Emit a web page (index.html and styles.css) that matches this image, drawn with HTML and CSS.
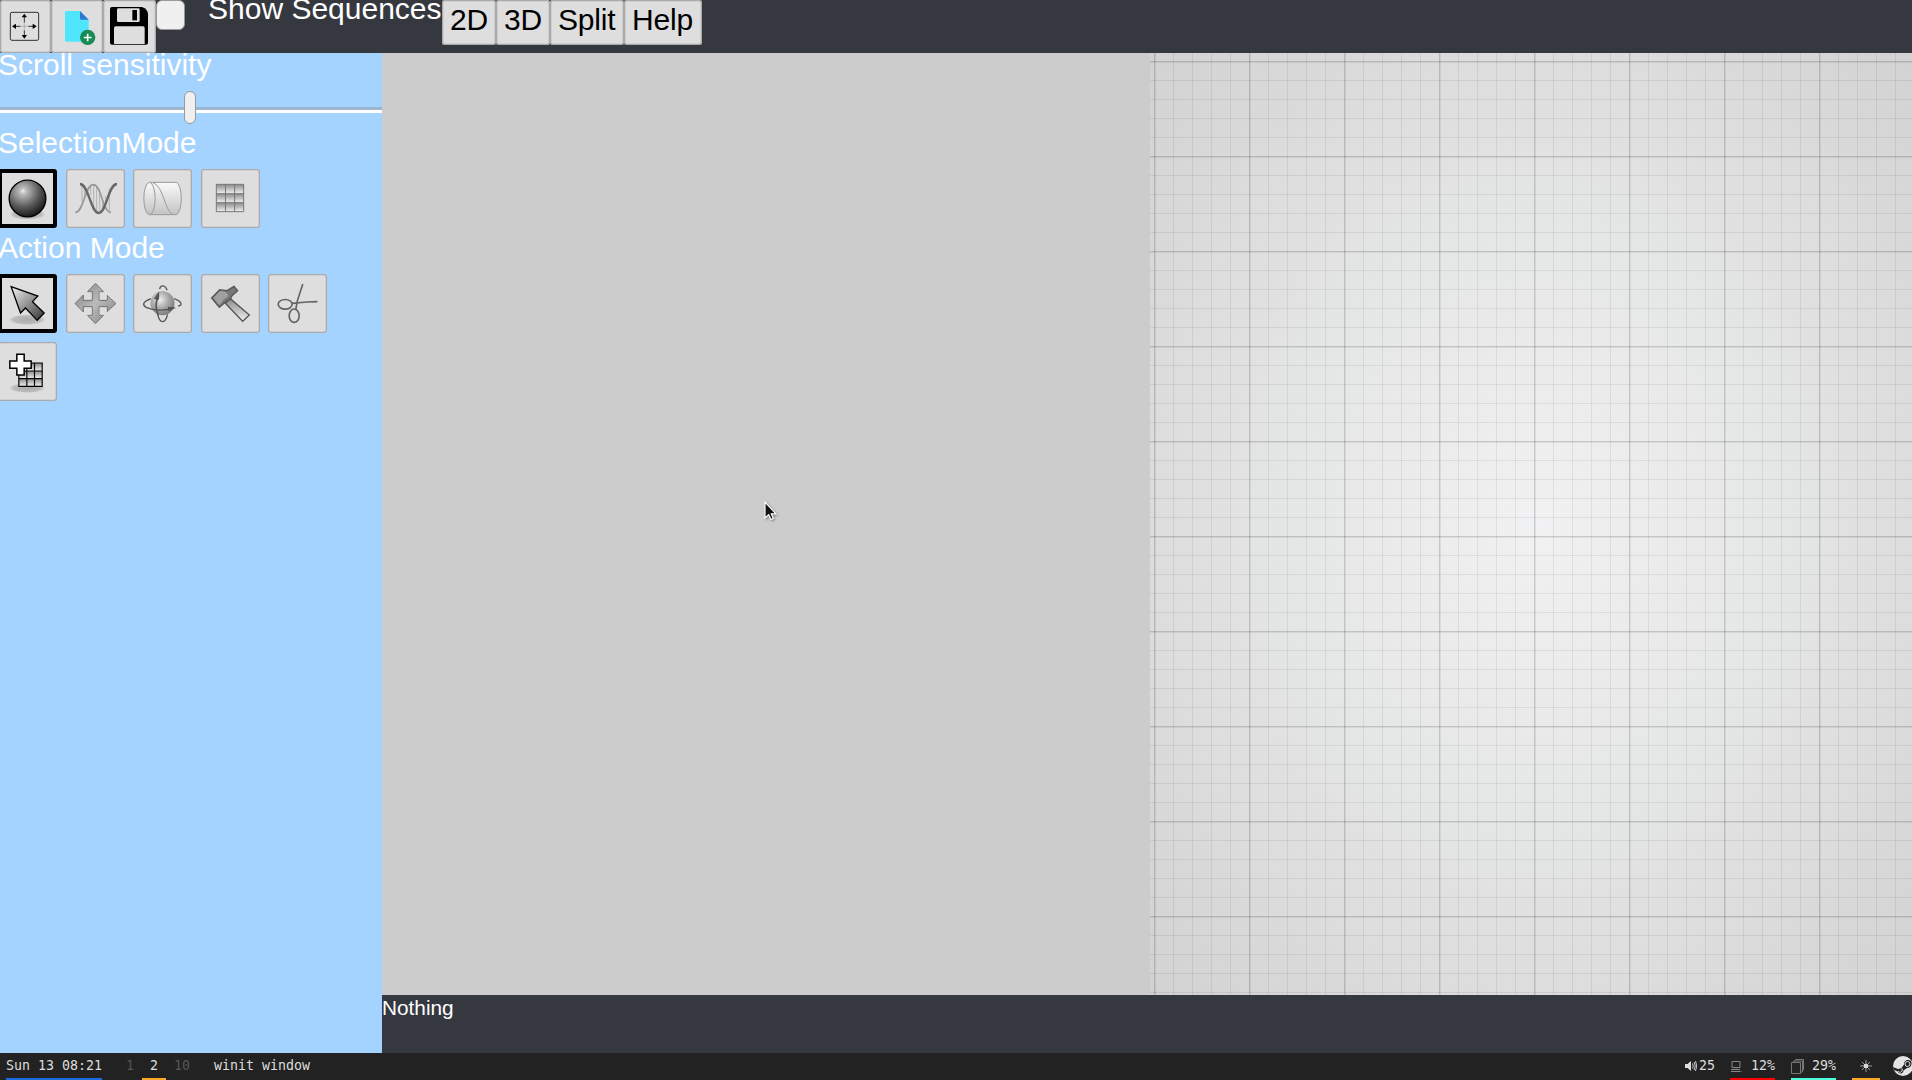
FILE: index.html
```html
<!DOCTYPE html>
<html lang="en">
<head>
<meta charset="utf-8">
<title>winit window</title>
<link rel="stylesheet" href="styles.css">
</head>
<body>
<svg class="defs" aria-hidden="true">
  <defs>
    <radialGradient id="ball" cx=".38" cy=".3" r=".75"><stop offset="0" stop-color="#eee"/><stop offset=".12" stop-color="#bbb"/><stop offset=".6" stop-color="#555"/><stop offset="1" stop-color="#111"/></radialGradient>
    <radialGradient id="ball2" cx=".4" cy=".35" r=".7"><stop offset="0" stop-color="#eee"/><stop offset=".5" stop-color="#aaa"/><stop offset="1" stop-color="#777"/></radialGradient>
    <linearGradient id="down" x2="0" y2="1"><stop offset="0" stop-color="#fafafa"/><stop offset="1" stop-color="#c4c4c4"/></linearGradient>
    <linearGradient id="cell" x2="0" y2="1"><stop offset="0" stop-color="#8b8b8b"/><stop offset="1" stop-color="#f2f2f2"/></linearGradient>
    <linearGradient id="diag" x2="1" y2="1"><stop offset="0" stop-color="#f4f4f4"/><stop offset="1" stop-color="#333"/></linearGradient>
    <linearGradient id="grey" x2="1" y2="1"><stop offset="0" stop-color="#7c7c7c"/><stop offset=".5" stop-color="#bbb"/><stop offset="1" stop-color="#7c7c7c"/></linearGradient>
    <radialGradient id="shade"><stop offset="0" stop-color="#aaa"/><stop offset=".75" stop-color="#bbb"/><stop offset="1" stop-color="#bbb" stop-opacity="0"/></radialGradient>
  </defs>
</svg>
<header class="topbar">
  <button class="tool" aria-label="Fit"><svg viewBox="0 0 153 159"><rect x="31" y="37" width="85" height="84" rx="5" fill="none" stroke="#111" stroke-width="2.5"/><path d="M73 48V67M73 91V110M43 79H61M85 79H103" stroke="#111" stroke-width="2.5"/><path d="M73 68V90M62 79H84" stroke="#333" stroke-width="2" stroke-dasharray="2 4"/><path d="M73 41l8 11H65zM73 116l8-11H65zM36 79l12-8v16zM110 79l-12-8v16z"/></svg></button>
  <button class="tool new" aria-label="New"><svg viewBox="153 0 156 159"><path d="M199 33H240L266 59V125H199Q195 125 195 121V37Q195 33 199 33z" fill="#4ee5fd"/><path d="M240 33L266 59H243Q240 59 240 56z" fill="#2f78d2"/><circle cx="263" cy="112" r="23" fill="#188a53"/><path d="M263 101V124M251.500 112.500H275" stroke="#fff" stroke-width="5"/></svg></button>
  <button class="tool save" aria-label="Save"><svg viewBox="309 0 159 159"><path d="M336 21H426Q444 28 444 43V128Q444 134 438 134H336Q330 134 330 128V27Q330 21 336 21z"/><path d="M355 25H415Q419 25 419 29V62Q419 66 415 66H355Q351 66 351 62V29Q351 25 355 25zM348 79H429Q434 79 434 84V132H342V84Q342 79 348 79z" fill="#dedede"/><path d="M397 30H411V61H397z"/></svg></button>
  <span class="check"></span>
  <span class="check-label">Show Sequences</span>
  <button class="view">2D</button><button class="view">3D</button><button class="view split">Split</button><button class="view help">Help</button>
</header>
<main class="workspace">
  <aside class="sidebar">
    <h2 class="label">Scroll sensitivity</h2>
    <div class="slider"><span class="thumb"></span></div>
    <h2 class="label">SelectionMode</h2>
    <div class="icons">
      <button class="icon active" aria-label="Nucleotide"><svg viewBox="-4.500 147 177 177"><ellipse cx="84" cy="283" rx="55" ry="16" fill="url(#shade)"/><circle cx="84" cy="235.500" r="55" fill="url(#ball)" stroke="#000" stroke-width="4"/></svg></button>
      <button class="icon" aria-label="Strand"><svg viewBox="198 147 177 177"><path d="M246 198V246M254 204V232M272 196V224M281 194V258M290 199V276M299 217V278M308 240V270M317 228V266M328 206V273" stroke="#aaa" stroke-width="2.500"/><path d="M226 277C252 277 254 194 280 194S306 277 333 277" fill="none" stroke="#999" stroke-width="5"/><path d="M240 192C266 192 272 279 296 279S324 192 351 192" fill="none" stroke="#686868" stroke-width="7"/></svg></button>
      <button class="icon" aria-label="Helix"><svg viewBox="400.500 147 177 177"><path d="M450 187H532C550 203 550 267 532 284H450z" fill="url(#down)" stroke="#999" stroke-width="3"/><ellipse cx="450" cy="235.500" rx="17" ry="48.500" fill="url(#down)" stroke="#999" stroke-width="3"/><path d="M460 188C493 198 494 270 519 283" fill="none" stroke="#999" stroke-width="3"/></svg></button>
      <button class="icon" aria-label="Grid"><svg viewBox="603 147 177 177"><g fill="url(#cell)"><path d="M649 193h83v28h-83z"/><path d="M649 221h83v27h-83z"/><path d="M649 248h83v27h-83z"/></g><path d="M649 193H731V275H649zM676.500 193V275M704 193V275M649 221H731M649 248H731" fill="none" stroke="#777" stroke-width="3"/></svg></button>
    </div>
    <h2 class="label action">Action Mode</h2>
    <div class="icons">
      <button class="icon active" aria-label="Select"><svg viewBox="-4.500 42 177 177"><ellipse cx="83" cy="179" rx="55" ry="16" fill="url(#shade)"/><path d="M35 80L115 108L99 125L134 159L113 181L78 144L63 159z" fill="url(#diag)" stroke="#000" stroke-width="4"/></svg></button>
      <button class="icon" aria-label="Translate"><svg viewBox="198 42 177 177"><path d="M286.500 70L311 95H299V106H305V122H320V105L348 130.500L320 156V140H305V155H299V166H311L286.500 191L262 166H274V140H250V156L225 130.500L250 105V122H274V95H262z" fill="url(#grey)" stroke="#777" stroke-width="3"/><path d="M251 94h26v27h-26zM296 94h26v27h-26zM251 140h26v27h-26zM296 140h26v27h-26z" fill="#dedede"/><path d="M262 95H277V121H250V105M311 95H297V121H322V105M262 166H277V140H250V156M311 166H297V140H322V156" fill="none" stroke="#777" stroke-width="3"/></svg></button>
      <button class="icon" aria-label="Rotate"><svg viewBox="400.500 42 177 177"><path d="M480 87C484 74 496 74 503 91M475 163C480 192 498 192 504 163" fill="none" stroke="#555" stroke-width="4"/><circle cx="489" cy="130" r="36" fill="url(#ball2)"/><path d="M454 116C430 126 427 134 440 142C460 151 497 155 523 143M524 116C547 125 551 136 536 138" fill="none" stroke="#555" stroke-width="4"/><path d="M478 106C468 123 467 144 476 166" fill="none" stroke="#555" stroke-width="5"/><path d="M479 94L463 116L478 120zM505 140L530 143L507 154z" fill="#555"/></svg></button>
      <button class="icon" aria-label="Build"><svg viewBox="603 42 177 177"><path d="M676 130L691 116L748 165L728 184z" fill="url(#cell)" stroke="#555" stroke-width="4"/><path d="M635 114L659 89L681 92L702 79L713 92L696 107L691 117L674 128L658 142z" fill="#777" stroke="#555" stroke-width="4"/><path d="M640 114L660 93L678 96L686 108L672 118L658 136z" fill="#a0a0a0"/></svg></button>
      <button class="icon" aria-label="Cut"><svg viewBox="805.500 42 177 177"><g fill="none" stroke="#656565" stroke-width="5"><ellipse cx="857" cy="133" rx="21" ry="14.500"/><ellipse cx="884" cy="167" rx="15" ry="20"/><path d="M877 130L922 126L954 125M889 148L893 124L910 72"/></g></svg></button>
      <button class="icon" aria-label="Add grid"><svg viewBox="-4.500 244 177 177"><ellipse cx="83" cy="382" rx="55" ry="15" fill="url(#shade)"/><g fill="url(#cell)"><path d="M58 307h71v24H58z"/><path d="M58 331h71v23H58z"/><path d="M58 354h71v23H58z"/></g><path d="M58 307H128V377H58zM82 307V377M105 307V377M58 331H128M58 354H128" fill="none" stroke="#000" stroke-width="3.500"/><path d="M52 281H74V301H95V323H74V343H52V323H31V301H52z" fill="#fff" stroke="#000" stroke-width="4.500"/></svg></button>
    </div>
  </aside>
  <section class="stage">
    <div class="views"><div class="scene"></div><div class="flat"></div></div>
    <footer class="status">Nothing</footer>
  </section>
</main>
<nav class="taskbar">
  <span class="clock">Sun 13 08:21</span>
  <span class="desk">1</span><span class="desk current">2</span><span class="desk ten">10</span>
  <span class="title">winit window</span>
  <span class="volume"><svg viewBox="0 0 12 12" width="12" height="12"><path d="M0 4h2.500L6 1v10L2.500 8H0z" fill="#ddd"/><path d="M7.500 3.500q1.500 2.500 0 5M9 2q2.500 4 0 8M10.500 1q2.500 5 0 10" fill="none" stroke="#ccc"/></svg>25</span>
  <span class="meter cpu"><svg viewBox="0 0 12 13" width="12" height="13"><path d="M2 1.500h8v6H2zM1 9.500h9M1 11.500h9M10.500 11.500h1" fill="none" stroke="#888"/></svg>12%</span>
  <span class="meter mem"><svg viewBox="0 0 14 15" width="14" height="15"><path d="M.5 3.500h9v11h-9zM2.500 3V2h9v11h-1.500M4.500 2V.5h8V11h-1" fill="none" stroke="#777"/></svg>29%</span>
  <span class="sun"><svg viewBox="0 0 12 12" width="12" height="12"><circle cx="6" cy="6" r="2.300" fill="#eee"/><path d="M6 0V12M0 6H12M2 2L10 10M10 2L2 10" stroke="#ccc" stroke-width=".7"/></svg></span>
  <svg class="steam" viewBox="0 0 20 20" width="20" height="20"><circle cx="10" cy="10" r="10" fill="#e4e4e4"/><path d="M0 11L5.500 13.300Q7 12 8.500 12L11 8.500Q11 4 15 4T18.500 8T14 12L10.500 14.500Q10 18 7 17.500Q5 17 4.500 15.300L.8 14z" fill="#222"/><circle cx="14.500" cy="8" r="2.500" fill="#222" stroke="#ddd"/><path d="M5 15.500q2.500 2.200 4-.5t-1.500-2" fill="none" stroke="#ddd"/></svg>
</nav>
<svg class="pointer" viewBox="0 0 14 22" width="14" height="22"><path d="M1 1V17L4.700 13.700L7 18.500L9.300 17.500L7.300 12.800H12z" fill="#111" stroke="#fff" stroke-width="1.200"/></svg>
</body>
</html>
```
FILE: styles.css
```css
* { box-sizing: border-box; }
body {
  margin: 0;
  width: 1912px;
  height: 1080px;
  overflow: hidden;
  display: flex;
  flex-direction: column;
  font-family: "Liberation Sans", Arial, sans-serif;
  font-size: 30px;
  color: #fff;
  background: #222;
}
button {
  flex: none;
  margin: 0;
  padding: 0;
  border: 0;
  border-radius: 3px;
  font: inherit;
  color: #000;
  background: #dedede;
  box-shadow: inset 0 0 0 1.300px #aaa;
}
svg { display: block; }
.defs { position: absolute; width: 0; height: 0; }

.topbar {
  flex: none;
  height: 53px;
  display: flex;
  align-items: flex-start;
  background: #363840;
}
.tool { width: 51px; height: 53px; }
.tool.new { width: 52px; }
.tool.save { width: 53px; }
.tool svg { width: 100%; height: 100%; }
.check {
  width: 29px;
  height: 30px;
  border: 1px solid #999;
  border-radius: 6px;
  background: #f0f0f0;
}
.check-label {
  width: 234px;
  margin: -9px 0 0 23px;
  line-height: 36px;
  white-space: nowrap;
}
.view {
  width: 54px;
  height: 45px;
  padding: 2px 0 7px;
  line-height: 36px;
  letter-spacing: -.2px;
}
.view.split { width: 73.500px; }
.view.help { width: 78px; }

.workspace { flex: none; height: 1000px; display: flex; }
.sidebar {
  width: 382px;
  overflow: hidden;
  background: #a4d3ff;
}
.label {
  margin: 0 0 0 -2px;
  font-size: 30px;
  font-weight: 400;
  line-height: 36px;
}
.label:first-child { margin-top: -6px; }
.slider {
  height: 42px;
  padding: 8px 0 0 184px;
  background: linear-gradient(#9cb6cf 50%, #fff 50%) 0 24px / 100% 6px no-repeat;
}
.thumb {
  display: block;
  width: 12px;
  height: 33px;
  border: 1px solid #999;
  border-radius: 6px;
  background: #f0f0f0;
}
.icons {
  display: flex;
  flex-wrap: wrap;
  gap: 8.500px;
  margin: 8px 0 0 -2px;
}
.icon { width: 59px; height: 59px; }
.icon svg { width: 59px; height: 59px; }
.icon.active { box-shadow: inset 0 0 0 4px #000; }
.label.action { margin-top: 2px; }

.stage { flex: 1; display: flex; flex-direction: column; }
.views { height: 942px; display: flex; }
.scene { width: 768px; background: #ccc; }
.flat {
  flex: 1;
  background:
    linear-gradient(90deg, rgba(0,0,0,.1) 1px, rgba(0,0,0,.07) 1px 2px, transparent 2px) 4px 8px / 95px 95px,
    linear-gradient(rgba(0,0,0,.1) 1px, rgba(0,0,0,.07) 1px 2px, transparent 2px) 4px 8px / 95px 95px,
    linear-gradient(90deg, rgba(0,0,0,.07) 1px, transparent 1px) 4px 8px / 19px 19px,
    linear-gradient(rgba(0,0,0,.07) 1px, transparent 1px) 4px 8px / 19px 19px,
    radial-gradient(ellipse farthest-corner at 385px 470px, #f1f2f4 0, #f0f0f0 5%, #e9e9e9 33%, #e5e8e7 41%, #e3e5e4 51%, #e1e1e1 57%, #dddddd 70%, #d9d9d9 79%, #d2d2d2 100%);
}
.status {
  flex: 1;
  padding-top: 1px;
  font-size: 20.800px;
  line-height: 24px;
  background: #363840;
}

.taskbar {
  height: 27px;
  display: flex;
  padding-left: 6px;
  font: 13.290px/24px "DejaVu Sans Mono", monospace;
  color: #ddd;
  background: #222;
}
.taskbar > span {
  flex: none;
  height: 27px;
  display: flex;
  align-items: center;
  padding-bottom: 1px;
  white-space: pre;
}
.clock { width: 96px; box-shadow: inset 0 -2px #1a6be0; }
.desk { width: 24px; padding-left: 8px; color: #555; }
.clock + .desk { margin-left: 16px; }
.desk.current { color: #ddd; box-shadow: inset 0 -2px #fda726; }
.desk.ten { width: 32px; }
.title { margin-left: 16px; }
.volume { margin-left: auto; width: 45px; gap: 2px; }
.meter { width: 45px; margin-right: 16px; justify-content: space-between; }
.cpu { box-shadow: inset 0 -2px #f00; }
.mem { box-shadow: inset 0 -2px #4fffdc; }
.sun { width: 28px; justify-content: center; box-shadow: inset 0 -2px #fda726; }
.steam { flex: none; margin: 3px -1px 0 13px; }

.pointer { position: absolute; left: 764px; top: 501px; filter: drop-shadow(1px 1px 1px rgba(0,0,0,.4)); }
```
